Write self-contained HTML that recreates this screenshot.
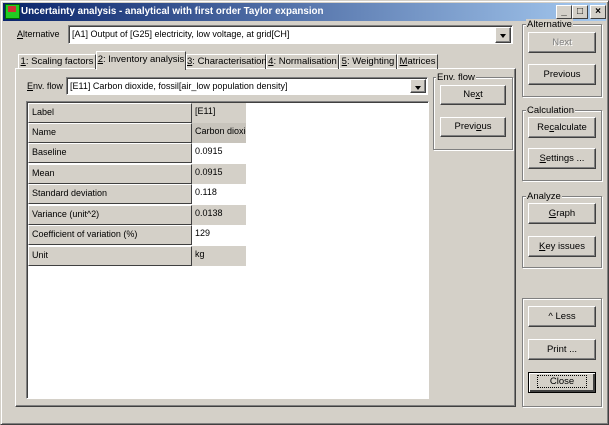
<!DOCTYPE html>
<html><head><style>
*{box-sizing:border-box;margin:0;padding:0}
body{width:609px;height:425px;background:#d4d0c8;font-family:"Liberation Sans",sans-serif;font-size:9px;color:#000;position:relative;overflow:hidden;white-space:nowrap}
.a{position:absolute}
.win{left:0;top:0;width:609px;height:425px;border:1px solid;border-color:#d4d0c8 #404040 #404040 #d4d0c8;box-shadow:inset 1px 1px #fff,inset -1px -1px #808080}
.title{left:3px;top:3px;width:603px;height:18px;background:linear-gradient(90deg,#0a246a,#a6caf0);color:#fff;font-weight:bold;font-size:9.8px;line-height:18px;padding-left:18px}
.cb{width:16px;height:14px;top:5px;background:#d4d0c8;border:1px solid;border-color:#fff #404040 #404040 #fff;font-size:10px;line-height:11px;text-align:center;font-weight:bold}
.btn{background:#d4d0c8;border:1px solid;border-color:#fff #404040 #404040 #fff;box-shadow:inset -1px -1px #808080;text-align:center;font-size:9.5px}
.sunk{background:#fff;border:1px solid;border-color:#808080 #fff #fff #808080;box-shadow:inset 1px 1px #404040}
.grp{border:1px solid #808080;box-shadow:1px 1px #fff,inset 1px 1px #fff}
.gl{background:#d4d0c8;padding:0 1px;font-size:9.5px;line-height:11px}
.dd{width:16px;height:16px;right:1px;top:1px}
.dd::after{content:"";position:absolute;left:4px;top:6px;border:3px solid transparent;border-top:4px solid #000;border-bottom:0;width:0;height:0}
.tab{top:54px;height:15px;border:1px solid;border-color:#fff #404040 transparent #fff;border-bottom:0;text-align:center;line-height:13px;font-size:9.5px}
.row{left:28px;width:218px;height:20px}
.row div{position:absolute;top:0;height:20px;line-height:17px;padding-left:3px;font-size:9px}
.l{left:0;width:164px;background:#d4d0c8;border:1px solid;border-color:#fff #404040 #404040 #fff}
.v{left:164px;width:54px;background:#d4d0c8}
.w{background:#fff!important}
u{text-decoration:underline}
</style></head><body>
<div class="a win"></div>
<div class="a title">Uncertainty analysis - analytical with first order Taylor expansion</div>
<div class="a" style="left:5px;top:4px;width:15px;height:15px;background:#2c2;border:1px solid #060"><div style="position:absolute;left:2px;top:1px;width:8px;height:6px;background:#c33"></div></div>
<div class="a cb" style="left:556px">_</div><div class="a cb" style="left:572px">□</div><div class="a cb" style="left:590px">×</div>

<div class="a" style="left:17px;top:29px"><u>A</u>lternative</div>
<div class="a sunk" style="left:68px;top:25px;width:445px;height:19px"><span class="a" style="left:3px;top:3px">[A1] Output of [G25] electricity, low voltage, at grid[CH]</span><div class="a btn dd"></div></div>

<div class="a" style="left:15px;top:68px;width:501px;height:339px;border:1px solid;border-color:#fff #404040 #404040 #fff;box-shadow:inset -1px -1px #808080"></div>
<div class="a tab" style="left:18px;width:78px"><u>1</u>: Scaling factors</div>
<div class="a tab" style="left:186px;width:80px"><u>3</u>: Characterisation</div>
<div class="a tab" style="left:266px;width:73px"><u>4</u>: Normalisation</div>
<div class="a tab" style="left:339px;width:58px"><u>5</u>: Weighting</div>
<div class="a tab" style="left:397px;width:41px"><u>M</u>atrices</div>
<div class="a tab" style="left:96px;top:51px;width:90px;height:19px;background:#d4d0c8;line-height:15px"><u>2</u>: Inventory analysis</div>

<div class="a" style="left:27px;top:81px"><u>E</u>nv. flow</div>
<div class="a sunk" style="left:66px;top:77px;width:362px;height:18px"><span class="a" style="left:3px;top:3px">[E11] Carbon dioxide, fossil[air_low population density]</span><div class="a btn dd" style="height:14px"></div></div>

<div class="a sunk" style="left:26px;top:101px;width:403px;height:298px"></div>
<div class="a row" style="top:103px"><div class="l">Label</div><div class="v">[E11]</div></div>
<div class="a row" style="top:123px"><div class="l">Name</div><div class="v" style="background:#c8c4bc;overflow:hidden">Carbon dioxide</div></div>
<div class="a row" style="top:143px"><div class="l">Baseline</div><div class="v w">0.0915</div></div>
<div class="a row" style="top:164px"><div class="l">Mean</div><div class="v">0.0915</div></div>
<div class="a row" style="top:184px"><div class="l">Standard deviation</div><div class="v w">0.118</div></div>
<div class="a row" style="top:205px"><div class="l">Variance (unit^2)</div><div class="v">0.0138</div></div>
<div class="a row" style="top:225px"><div class="l">Coefficient of variation (%)</div><div class="v w">129</div></div>
<div class="a row" style="top:246px"><div class="l">Unit</div><div class="v">kg</div></div>

<div class="a grp" style="left:433px;top:77px;width:80px;height:73px"></div>
<div class="a gl" style="left:436px;top:72px">Env. flow</div>
<div class="a btn" style="left:440px;top:85px;width:66px;height:20px;line-height:18px">Ne<u>x</u>t</div>
<div class="a btn" style="left:440px;top:117px;width:66px;height:20px;line-height:18px">Previ<u>o</u>us</div>

<div class="a grp" style="left:522px;top:24px;width:80px;height:73px"></div>
<div class="a gl" style="left:526px;top:19px">Alternative</div>
<div class="a btn" style="left:528px;top:32px;width:68px;height:21px;line-height:19px"><span style="color:#808080;text-shadow:1px 1px #fff">Next</span></div>
<div class="a btn" style="left:528px;top:64px;width:68px;height:21px;line-height:19px">Previous</div>

<div class="a grp" style="left:522px;top:110px;width:80px;height:71px"></div>
<div class="a gl" style="left:526px;top:105px">Calculation</div>
<div class="a btn" style="left:528px;top:117px;width:68px;height:21px;line-height:19px">Re<u>c</u>alculate</div>
<div class="a btn" style="left:528px;top:148px;width:68px;height:21px;line-height:19px"><u>S</u>ettings ...</div>

<div class="a grp" style="left:522px;top:196px;width:80px;height:72px"></div>
<div class="a gl" style="left:526px;top:191px">Analyze</div>
<div class="a btn" style="left:528px;top:203px;width:68px;height:21px;line-height:19px"><u>G</u>raph</div>
<div class="a btn" style="left:528px;top:236px;width:68px;height:21px;line-height:19px"><u>K</u>ey issues</div>

<div class="a grp" style="left:522px;top:298px;width:80px;height:109px"></div>
<div class="a btn" style="left:528px;top:306px;width:68px;height:21px;line-height:19px">^ Less</div>
<div class="a btn" style="left:528px;top:339px;width:68px;height:21px;line-height:19px">Print ...</div>
<div class="a btn" style="left:528px;top:372px;width:68px;height:21px;line-height:17px;border:1px solid #000;box-shadow:inset 1px 1px #fff,inset -2px -2px #404040"><span style="border:1px dotted #000;padding:0 12px">Close</span></div>
</body></html>
